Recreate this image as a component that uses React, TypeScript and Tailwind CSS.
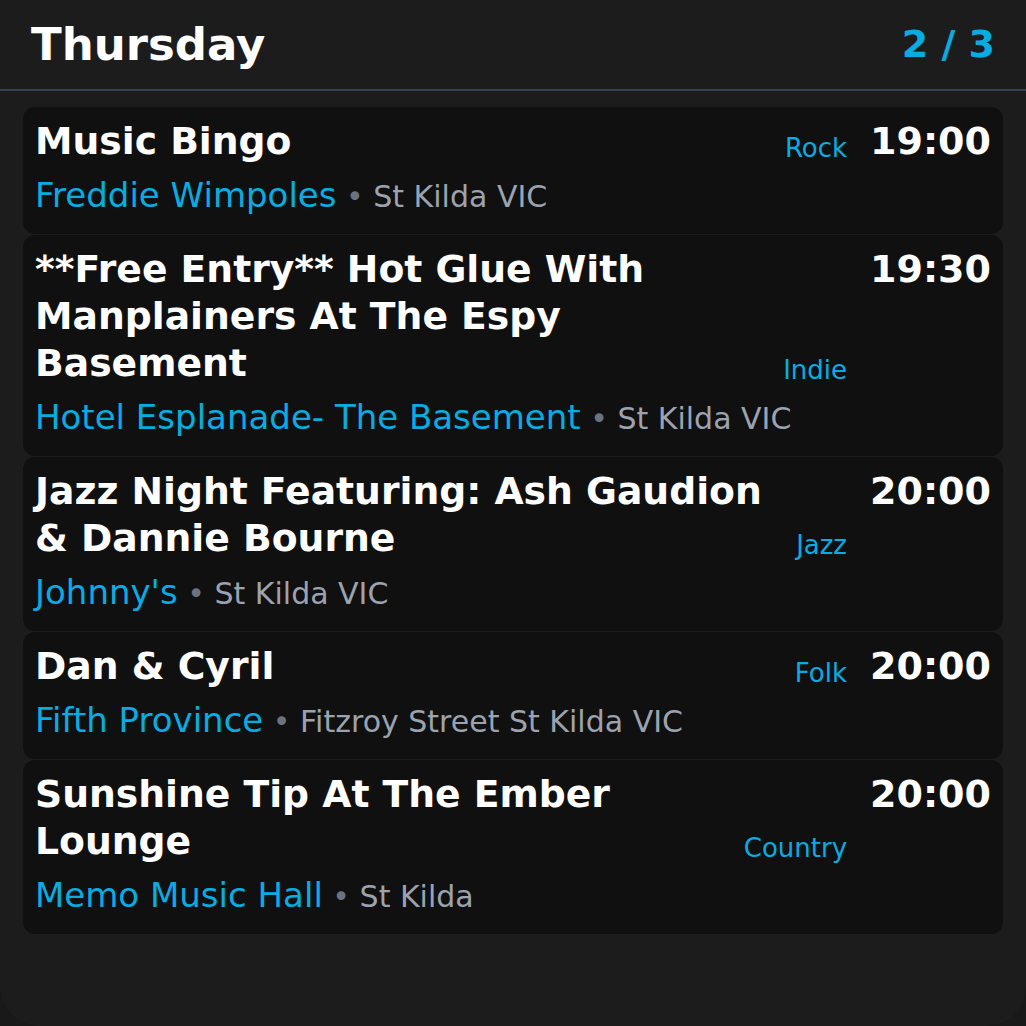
import React from "react";

type Gig = {
  title: string;
  genre: string;
  time: string;
  venue: string;
  location: string;
};

const gigs: Gig[] = [
  {
    title: "Music Bingo",
    genre: "Rock",
    time: "19:00",
    venue: "Freddie Wimpoles",
    location: "St Kilda VIC",
  },
  {
    title: "**Free Entry** Hot Glue With Manplainers At The Espy Basement",
    genre: "Indie",
    time: "19:30",
    venue: "Hotel Esplanade- The Basement",
    location: "St Kilda VIC",
  },
  {
    title: "Jazz Night Featuring: Ash Gaudion & Dannie Bourne",
    genre: "Jazz",
    time: "20:00",
    venue: "Johnny's",
    location: "St Kilda VIC",
  },
  {
    title: "Dan & Cyril",
    genre: "Folk",
    time: "20:00",
    venue: "Fifth Province",
    location: "Fitzroy Street St Kilda VIC",
  },
  {
    title: "Sunshine Tip At The Ember Lounge",
    genre: "Country",
    time: "20:00",
    venue: "Memo Music Hall",
    location: "St Kilda",
  },
];

function GigCard({ gig }: { gig: Gig }) {
  return (
    <div className="rounded-[12px] bg-[#101010] px-3 pt-[11px] pb-[16px]">
      <div className="flex">
        <div className="flex-1 text-[37.7px] font-bold leading-[47px] text-white">
          {gig.title}
        </div>
        <div className="ml-3 self-end text-[26px] leading-[34px] text-[#07ade2]">
          {gig.genre}
        </div>
        <div className="ml-[23px] self-start text-[38px] font-bold leading-[47px] text-white">
          {gig.time}
        </div>
      </div>
      <div className="mt-[9px] text-[34px] leading-[42px] text-[#07ade2]">
        {gig.venue}
        <span className="text-[30px] text-[#6b7280]"> • </span>
        <span className="text-[30px] text-[#9ca3af]">{gig.location}</span>
      </div>
    </div>
  );
}

export default function App() {
  return (
    <div
      className="h-[1026px] w-[1026px] bg-[#191919]"
      style={{ fontFamily: '"DejaVu Sans", Verdana, sans-serif' }}
    >
      <div className="flex h-full flex-col rounded-b-[40px] bg-[#1c1c1c]">
        <div className="flex h-[91px] items-center justify-between border-b-2 border-[#374151] px-[31px]">
          <h1 className="text-[45px] font-bold text-white">Thursday</h1>
          <span className="text-[38px] font-bold text-[#07ade2]">2 / 3</span>
        </div>
        <div className="flex flex-col gap-[1px] px-[23px] pt-[16px]">
          {gigs.map((g, i) => (
            <GigCard key={i} gig={g} />
          ))}
        </div>
      </div>
    </div>
  );
}
